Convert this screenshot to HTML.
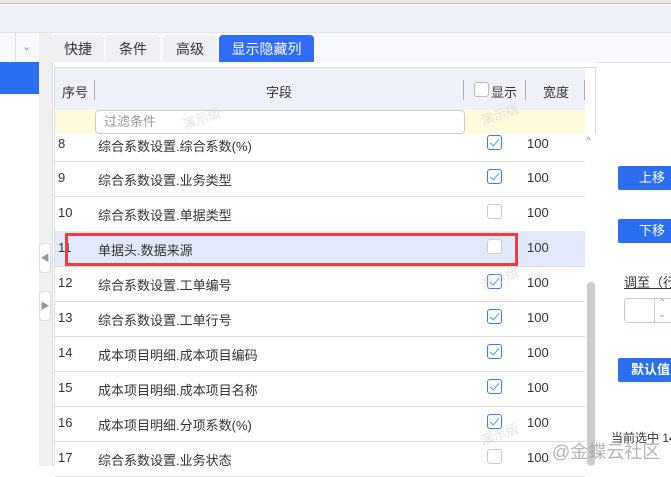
<!DOCTYPE html><html><head><meta charset="utf-8"><style>
body{margin:0;width:671px;height:466px;overflow:hidden;background:#fff;font-family:"Liberation Sans","Noto Sans CJK SC",sans-serif;font-size:13px;color:#333;position:relative}
.a{position:absolute;box-sizing:border-box;white-space:nowrap}
.tab{position:absolute;top:35px;height:27px;background:#eef0f4;border-radius:4px 4px 0 0;text-align:center;line-height:28px;font-size:14px;color:#333}
.row{position:absolute;left:55px;width:530px;border-bottom:1px solid #ddd;height:35px}
.row span{position:absolute;top:9px;white-space:nowrap}
.cb{position:absolute;left:432px;top:8px;width:15px;height:15px;border:1px solid #3d7cf0;border-radius:3px;box-sizing:border-box;background:#fff}
.cb.e{border-color:#ccc}
.cb:not(.e)::after{content:"";position:absolute;left:4px;top:1px;width:4px;height:8px;border:solid #4aa0e6;border-width:0 1.5px 1.5px 0;transform:rotate(40deg)}
.btn{position:absolute;left:618px;width:60px;height:24px;background:#2b6ff0;color:#fff;border-radius:2px;line-height:24px;padding-left:21px;box-sizing:border-box;white-space:nowrap}
</style></head><body>
<div class="a" style="left:0;top:0;width:671px;height:4px;background:#e6e6e6;border-bottom:1px solid #bbb"></div>
<div class="a" style="left:0;top:5px;width:671px;height:27px;background:#eef1f7"></div>
<div class="a" style="left:0;top:32px;width:671px;height:31px;background:#f8f9fc;border-top:1px solid #e2e4ea;border-bottom:1px solid #e2e4ea"></div>
<div class="a" style="left:0;top:63px;width:40px;height:403px;background:#fff"></div>
<div class="a" style="left:15px;top:33px;width:1px;height:29px;background:#ddd"></div>
<div class="a" style="left:22px;top:40px;font-size:11px;color:#999">&#8964;</div>
<div class="a" style="left:0;top:62px;width:39px;height:32px;background:#2b6ff0"></div>
<div class="a" style="left:39px;top:33px;width:13px;height:433px;background:#f0f0f0"></div>
<div class="a" style="left:39px;top:243px;width:12px;height:30px;background:#fff;border:1px solid #ddd;border-radius:4px;color:#8a9ab0;font-size:9px;line-height:28px;text-align:center">&#9664;</div>
<div class="a" style="left:39px;top:291px;width:12px;height:30px;background:#fff;border:1px solid #ddd;border-radius:4px;color:#8a9ab0;font-size:9px;line-height:28px;text-align:center">&#9654;</div>
<div class="tab" style="left:52px;width:52px">快捷</div>
<div class="tab" style="left:106px;width:54px">条件</div>
<div class="tab" style="left:163px;width:54px">高级</div>
<div class="tab" style="left:219px;width:95px;background:#2f6bff;color:#fff">显示隐藏列</div>
<div class="a" style="left:52px;top:62px;width:544px;height:404px;background:#fff;border-left:1px solid #ddd"></div>
<div class="a" style="left:54px;top:67px;width:542px;height:399px;border:1px solid #ddd;border-bottom:none"></div>
<div class="a" style="left:55px;top:68px;width:530px;height:66px;background:#eef1f8"></div>
<div class="a" style="left:62px;top:82px">序号</div>
<div class="a" style="left:94px;top:80px;width:1px;height:20px;background:#aaa"></div>
<div class="a" style="left:266px;top:82px">字段</div>
<div class="a" style="left:463px;top:80px;width:1px;height:20px;background:#aaa"></div>
<div class="a" style="left:474px;top:82px;width:15px;height:15px;border:1px solid #bbb;border-radius:3px;background:#fff"></div>
<div class="a" style="left:491px;top:82px">显示</div>
<div class="a" style="left:525px;top:80px;width:1px;height:20px;background:#aaa"></div>
<div class="a" style="left:543px;top:82px">宽度</div>
<div class="a" style="left:584px;top:80px;width:1px;height:20px;background:#aaa"></div>
<div class="a" style="left:55px;top:110px;width:530px;height:24px;background:#fefbdc"></div>
<div class="a" style="left:95px;top:110px;width:370px;height:24px;background:#fff;border:1px solid #ccc;border-radius:4px;color:#999;padding:4px 8px;line-height:14px">过滤条件</div>
<div class="a" style="left:586px;top:134px;width:10px;height:332px;background:#fff"></div>
<div class="a" style="left:587px;top:282px;width:8px;height:184px;background:#ccc;border-radius:4px"></div>
<div class="a" style="left:586px;top:136px;font-size:10px;color:#999">^</div>
<div class="row" style="top:126px;height:35px"><span style="left:3px;top:10px">8</span><span style="left:43px;top:10px">综合系数设置.综合系数(%)</span><div class="cb" style="top:9px"></div><span style="left:472px;top:10px">100</span></div>
<div class="row" style="top:161px"><span style="left:3px">9</span><span style="left:43px">综合系数设置.业务类型</span><div class="cb"></div><span style="left:472px">100</span></div>
<div class="row" style="top:196px"><span style="left:3px">10</span><span style="left:43px">综合系数设置.单据类型</span><div class="cb e"></div><span style="left:472px">100</span></div>
<div class="row" style="top:231px;background:#e2e9fb"><span style="left:3px">11</span><span style="left:43px">单据头.数据来源</span><div class="cb e"></div><span style="left:472px">100</span></div>
<div class="row" style="top:266px"><span style="left:3px">12</span><span style="left:43px">综合系数设置.工单编号</span><div class="cb"></div><span style="left:472px">100</span></div>
<div class="row" style="top:301px"><span style="left:3px">13</span><span style="left:43px">综合系数设置.工单行号</span><div class="cb"></div><span style="left:472px">100</span></div>
<div class="row" style="top:336px"><span style="left:3px">14</span><span style="left:43px">成本项目明细.成本项目编码</span><div class="cb"></div><span style="left:472px">100</span></div>
<div class="row" style="top:371px"><span style="left:3px">15</span><span style="left:43px">成本项目明细.成本项目名称</span><div class="cb"></div><span style="left:472px">100</span></div>
<div class="row" style="top:406px"><span style="left:3px">16</span><span style="left:43px">成本项目明细.分项系数(%)</span><div class="cb"></div><span style="left:472px">100</span></div>
<div class="row" style="top:441px"><span style="left:3px">17</span><span style="left:43px">综合系数设置.业务状态</span><div class="cb e"></div><span style="left:472px">100</span></div>
<div class="a" style="left:65px;top:233px;width:453px;height:33px;border:3px solid #f03c3c"></div>
<div class="btn" style="top:166px">上移</div>
<div class="btn" style="top:219px">下移</div>
<div class="a" style="left:624px;top:272px;text-decoration:underline">调至（行</div>
<div class="a" style="left:624px;top:298px;width:60px;height:25px;border:1px solid #bcd;border-radius:4px;background:#fff"></div>
<div class="a" style="left:654px;top:299px;width:1px;height:23px;background:#ccc"></div>
<div class="a" style="left:658px;top:298px;font-size:10px;color:#aaa;line-height:11px">&#8963;<br>&#8964;</div>
<div class="btn" style="top:358px;padding-left:13px;font-weight:bold">默认值</div>
<div class="a" style="left:611px;top:429px;font-size:12px">当前选中 14</div>
<div class="a" style="left:552px;top:438px;font-size:18px;color:rgba(150,150,150,.7)">@金蝶云社区</div>
<div class="a" style="left:182px;top:108px;color:rgba(200,200,200,.5);transform:rotate(-20deg)">演示版</div>
<div class="a" style="left:480px;top:104px;color:rgba(200,200,200,.5);transform:rotate(-20deg)">演示版</div>
<div class="a" style="left:480px;top:268px;color:rgba(200,200,200,.5);transform:rotate(-20deg)">演示版</div>
<div class="a" style="left:480px;top:424px;color:rgba(200,200,200,.5);transform:rotate(-20deg)">演示版</div>
</body></html>
